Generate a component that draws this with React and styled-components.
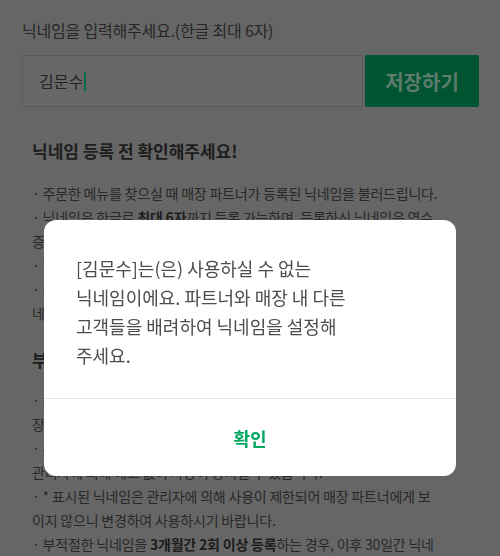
import React from "react";
import styled, { createGlobalStyle } from "styled-components";

const GlobalStyle = createGlobalStyle`
  html, body {
    margin: 0;
    padding: 0;
    background: #666666;
    font-family: "Noto Sans CJK KR", "Noto Sans", sans-serif;
  }
  * {
    box-sizing: border-box;
  }
`;

const Page = styled.div`
  padding: 18px 21px 0 22px;
  height: 556px;
  overflow: hidden;
`;

const Title = styled.p`
  margin: 0;
  font-size: 16px;
  line-height: 24px;
  letter-spacing: -0.2px;
  color: #262626;
`;

const InputRow = styled.div`
  display: flex;
  margin-top: 13px;
  height: 52px;
`;

const NameField = styled.div`
  flex: 1;
  display: flex;
  align-items: center;
  padding-left: 16px;
  background: #686868;
  border: 1px solid #5a5a5a;
  font-size: 16px;
  color: #242424;
`;

const Caret = styled.span`
  display: inline-block;
  width: 2px;
  height: 19px;
  margin-left: 1px;
  background: #0b6a45;
`;

const SaveButton = styled.button`
  width: 114px;
  margin-left: 2px;
  border: none;
  border-radius: 2px;
  background: #005431;
  color: #5e7c6d;
  font-family: inherit;
  font-size: 20px;
  font-weight: 700;
`;

const Info = styled.section`
  padding: 0 10px;
  margin-top: ${(p) => p.$top}px;
`;

const Heading = styled.h2`
  margin: 0;
  font-size: 17px;
  line-height: 24px;
  font-weight: 700;
  color: #1d1d1d;
`;

const Bullets = styled.div`
  margin-top: ${(p) => p.$top}px;
`;

const Bullet = styled.p`
  margin: 0;
  font-size: 14px;
  line-height: 24px;
  letter-spacing: -0.2px;
  white-space: nowrap;
  color: #282828;

  b {
    font-weight: 700;
    color: #1d1d1d;
  }
`;

const Backdrop = styled.div`
  position: fixed;
  inset: 0;
  display: flex;
  justify-content: center;
  align-items: flex-start;
  padding-top: 220px;
`;

const Dialog = styled.div`
  width: 412px;
  background: #ffffff;
  border-radius: 12px;
  overflow: hidden;
`;

const Message = styled.p`
  margin: 0;
  padding: 34px 78px 28px 32px;
  font-size: 18px;
  line-height: 29px;
  word-break: keep-all;
  color: #4d4d4d;
`;

const ConfirmButton = styled.button`
  display: block;
  width: 100%;
  height: 78px;
  border: none;
  border-top: 1px solid #e6e6e6;
  background: none;
  font-family: inherit;
  font-size: 18px;
  font-weight: 700;
  color: #00a862;
`;

export default function App() {
  return (
    <>
      <GlobalStyle />
      <Page>
        <Title>닉네임을 입력해주세요.(한글 최대 6자)</Title>
        <InputRow>
          <NameField>
            김문수
            <Caret />
          </NameField>
          <SaveButton>저장하기</SaveButton>
        </InputRow>

        <Info $top={32}>
          <Heading>닉네임 등록 전 확인해주세요!</Heading>
          <Bullets $top={18}>
            <Bullet>· 주문한 메뉴를 찾으실 때 매장 파트너가 등록된 닉네임을 불러드립니다.</Bullet>
            <Bullet>
              · 닉네임은 한글로 <b>최대 6자</b>까지 등록 가능하며, 등록하신 닉네임은 영수
              <br />
              증에도 함께 표시됩니다.
            </Bullet>
            <Bullet>· 닉네임은 언제든지 변경하실 수 있습니다.</Bullet>
            <Bullet>
              · 스타벅스 카드 또는 사이렌 오더로 주문하신 경우 등록하신 닉
              <br />
              네임을 불러드립니다.
            </Bullet>
          </Bullets>
        </Info>

        <Info $top={23}>
          <Heading>부적절한 닉네임 안내</Heading>
          <Bullets $top={16}>
            <Bullet>
              · 스타벅스 파트너나 다른 고객에게 불쾌감을 줄 수 있는 닉네임은 매
              <br />
              장에서 불러드리지 않습니다.
            </Bullet>
            <Bullet>
              · 부적절한 닉네임으로 판단되는 경우 해당 닉네임은 스타벅스
              <br />
              관리자에 의해 예고 없이 사용이 중지될 수 있습니다.
            </Bullet>
            <Bullet>
              · * 표시된 닉네임은 관리자에 의해 사용이 제한되어 매장 파트너에게 보
              <br />
              이지 않으니 변경하여 사용하시기 바랍니다.
            </Bullet>
            <Bullet>
              · 부적절한 닉네임을 <b>3개월간 2회 이상 등록</b>하는 경우, 이후 30일간 닉네
              <br />
              임 등록이 제한됩니다.
            </Bullet>
          </Bullets>
        </Info>
      </Page>

      <Backdrop>
        <Dialog>
          <Message>
            [김문수]는(은) 사용하실 수 없는 닉네임이에요. 파트너와 매장 내 다른 고객들을 배려하여
            닉네임을 설정해 주세요.
          </Message>
          <ConfirmButton>확인</ConfirmButton>
        </Dialog>
      </Backdrop>
    </>
  );
}
